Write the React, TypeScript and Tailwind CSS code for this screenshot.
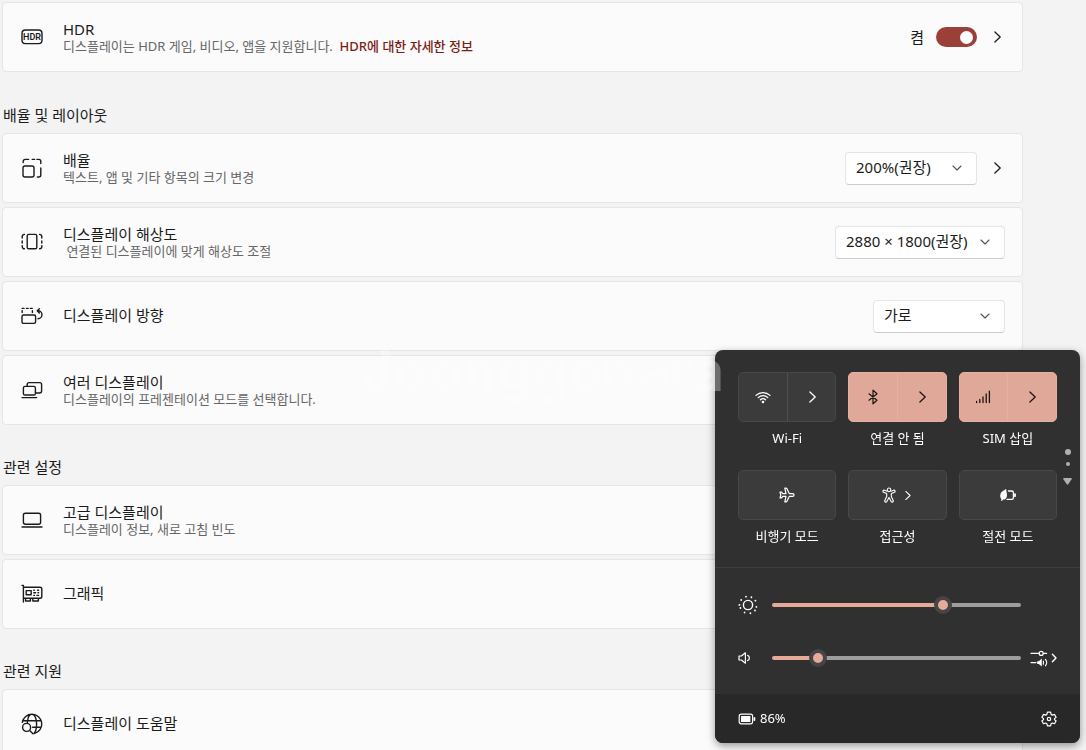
import React, { useState } from 'react';

type IconProps = { className?: string; children: React.ReactNode; size?: number };

function Icon({ className = '', children, size = 22 }: IconProps) {
  return (
    <svg
      width={size}
      height={size}
      viewBox={`0 0 ${size} ${size}`}
      fill="none"
      stroke="currentColor"
      strokeWidth="1.4"
      strokeLinecap="round"
      strokeLinejoin="round"
      aria-hidden="true"
      className={`shrink-0 ${className}`}
    >
      {children}
    </svg>
  );
}

const ChevronRight = ({ size = 16 }: { size?: number }) => (
  <svg width={size} height={size} viewBox="0 0 16 16" fill="none" stroke="currentColor" strokeWidth="1.3" strokeLinecap="round" strokeLinejoin="round" aria-hidden="true">
    <path d="M5.9 3 L11.2 8 L5.9 13" />
  </svg>
);

const HdrIcon = () => (
  <Icon>
    <rect x="1" y="4" width="20" height="13.6" rx="3.4" />
    <text x="11" y="14" textAnchor="middle" fontSize="9" fontWeight="600" fontFamily="Roboto" fill="currentColor" stroke="none">HDR</text>
  </Icon>
);

const ScaleIcon = () => (
  <Icon>
    <rect x="2" y="9" width="11" height="11" rx="2" />
    <path d="M2.2 5.6 V4.4 a2 2 0 0 1 2-2 H7.6 M11.2 2.4 H13.6 M16 2.4 H17.8 a2 2 0 0 1 2 2 V6.6 M19.8 11 V18 a2 2 0 0 1-2 2 H16.4" />
  </Icon>
);

const ResolutionIcon = () => (
  <Icon>
    <rect x="6.2" y="3.4" width="9.6" height="14.4" rx="1.6" />
    <path d="M3.4 3.4 a2.2 2.2 0 0 0-2.2 2.2 V7 M1.2 10 V12 M1.2 14.6 V15.6 a2.2 2.2 0 0 0 2.2 2.2 M18.6 3.4 a2.2 2.2 0 0 1 2.2 2.2 V7 M20.8 10 V12 M20.8 14.6 V15.6 a2.2 2.2 0 0 1-2.2 2.2" />
  </Icon>
);

const OrientationIcon = () => (
  <Icon>
    <rect x="1" y="10" width="13.6" height="8.4" rx="1.6" />
    <path d="M1.2 7.4 V5.6 M1.2 3.4 H3 M5.4 3.4 H7.2 M9.4 3.4 H11.2 M11.4 5.8 V7.4 M17 5.8 a4 4 0 0 1 0 8 M18.4 3.8 L16.2 5.8 L18.4 8" />
  </Icon>
);

const MultiIcon = () => (
  <Icon>
    <rect x="2.4" y="7.4" width="12" height="8.6" rx="1.6" />
    <path d="M6.2 7.2 V5.6 a2 2 0 0 1 2-2 H18.6 a2 2 0 0 1 2 2 V12 a2 2 0 0 1-2 2 H14.6 M1 18.6 H15.6" />
  </Icon>
);

const LaptopIcon = () => (
  <Icon>
    <rect x="2.4" y="4.2" width="17.2" height="11" rx="2" />
    <path d="M1 18 H21" />
  </Icon>
);

const GraphicsIcon = () => (
  <Icon>
    <path d="M1 2.4 H2.4 V19 M2.4 4.2 H19 a1.8 1.8 0 0 1 1.8 1.8 V13.4 a1.8 1.8 0 0 1-1.8 1.8 H2.4 M4.6 15.4 V18 H9.4 V15.4 M11.8 15.4 V18 H17.4 V15.4" />
    <rect x="5.2" y="7.6" width="5" height="4.2" />
    <path d="M12.8 7.2 H13.4 M16.6 7.2 H17.6 M12.8 9.8 H14.6 M17 9.8 H17.6 M12.8 12.4 H13.4 M16 12.4 H17.6" />
  </Icon>
);

const HelpIcon = () => (
  <Icon>
    <path d="M1.3 9.4 a9.8 9.8 0 1 1 12.4 11 M1.6 7.8 H20.2 M14 14.2 H20.2 M6.6 7.6 C7 3.6 9 1.2 11 1.2 C13.6 1.2 15.6 5.4 15.6 11 C15.6 16 14.4 19 13 20.4 M6.6 7.8 C6.4 8.4 6.4 9 6.4 9.4 M11.6 14.2 H14" />
    <circle cx="5.6" cy="14.4" r="4" />
    <path d="M8.6 17.4 L12 20.8" />
  </Icon>
);

const WifiIcon = () => (
  <Icon size={16}>
    <path strokeWidth="1.3" d="M1 6.4 a10 10 0 0 1 14 0 M3.2 8.6 a7 7 0 0 1 9.6 0 M5.4 10.8 a3.8 3.8 0 0 1 5.2 0" />
    <circle cx="8" cy="13" r="1.3" fill="currentColor" stroke="none" />
  </Icon>
);

const BluetoothIcon = () => (
  <Icon size={16}>
    <path strokeWidth="1.2" d="M4 4.8 L12 11.2 L8 14.8 V1.2 L12 4.8 L4 11.2" />
  </Icon>
);

const SignalIcon = () => (
  <Icon size={16}>
    <path strokeWidth="1.3" d="M1.6 13.6 V12.4 M4.8 13.6 V10.4 M8 13.6 V7.8 M11.2 13.6 V5 M14.4 13.6 V2.2" />
  </Icon>
);

const PlaneIcon = () => (
  <Icon size={16}>
    <path strokeWidth="1.2" d="M15 8 a1.3 1.3 0 0 0-1.3-1.3 H10.4 L7.8 1.6 a1 1 0 0 0-.9-.5 H5.8 L7 6.7 H3.8 L2.4 5 H1 L1.8 8 L1 11 H2.4 L3.8 9.3 H7 L5.8 14.9 H6.9 a1 1 0 0 0 .9-.5 L10.4 9.3 H13.7 A1.3 1.3 0 0 0 15 8 Z" />
  </Icon>
);

const AccessibilityIcon = () => (
  <Icon size={16}>
    <circle cx="8" cy="2.8" r="1.8" strokeWidth="1.1" />
    <path strokeWidth="1.1" d="M6 4.2 L3.4 3.2 a1.1 1.1 0 0 0-.9 2 L5.7 6.6 V9.4 L3.8 13.6 a1.1 1.1 0 0 0 2 .9 L8 10.6 L10.2 14.5 a1.1 1.1 0 0 0 2-.9 L10.3 9.4 V6.6 L13.5 5.2 a1.1 1.1 0 0 0-.9-2 L10 4.2" />
  </Icon>
);

const EnergyIcon = () => (
  <Icon size={16}>
    <path strokeWidth="1.3" d="M8.4 4 H11.8 a1.6 1.6 0 0 1 1.6 1.6 V10.8 a1.6 1.6 0 0 1-1.6 1.6 H7" />
    <path strokeWidth="1.8" d="M15 7.2 V9.2" />
    <path d="M6.2 2 C3.6 3.6 .2 4.8 .2 8.8 C.2 10.4 .8 11.4 1.4 12 L1 13.8 H2.2 L3 12.6 C6.4 12.6 7.4 9.6 6.8 6.4 C6.6 5 6.2 3.6 6.2 2 Z" fill="currentColor" stroke="none" />
  </Icon>
);

const SunIcon = () => (
  <Icon size={20}>
    <circle cx="10" cy="10" r="4.6" />
    <path strokeWidth="1.8" d="M8 1.6 V1.7 M13.4 2.2 V2.3 M17.4 5.6 V5.7 M18.4 11.8 V11.9 M17 15.4 V15.5 M12.4 18.2 V18.3 M6.6 17.4 V17.5 M2.4 13 V13.1 M1.4 9.8 V9.9 M3.2 5 V5.1" />
  </Icon>
);

const SpeakerIcon = () => (
  <Icon size={14}>
    <path strokeWidth="1.2" d="M1 5 H3.4 L7.4 1.8 V12.2 L3.4 9 H1 Z M9.6 4.4 a2.8 2.8 0 0 1 0 5.2" />
  </Icon>
);

// mixer and its chevron are one glyph
const MixerIcon = () => (
  <svg width="27" height="18" viewBox="0 0 27 18" fill="none" stroke="currentColor" strokeWidth="1.2" strokeLinecap="round" strokeLinejoin="round" aria-hidden="true">
    <path d="M1 4.4 H9 M13.4 4.4 H16.6 M1 13.6 H6" />
    <circle cx="11.2" cy="4.4" r="2" />
    <path d="M7.2 12.2 H8.8 L11.8 9.6 V17.6 L8.8 15 H7.2 Z" fill="currentColor" stroke="none" />
    <path strokeWidth="1.1" d="M13.4 12 V15.2 M15.4 10.4 a5 5 0 0 1 0 6.4" />
    <path strokeWidth="1.4" d="M22.4 5.2 L26 9 L22.4 12.8" />
  </svg>
);

const BatteryIcon = () => (
  <Icon size={18}>
    <rect x="1.2" y="4.2" width="13.4" height="9.6" rx="2" strokeWidth="1.2" />
    <rect x="3" y="6" width="9.4" height="6" rx=".6" fill="currentColor" stroke="none" />
    <path strokeWidth="1.8" d="M16.4 8 V10" />
  </Icon>
);

const GearIcon = () => (
  <Icon size={16}>
    <path strokeWidth="1.2" d="M6.4 1.2 H9.6 L10.1 3.4 L11.4 4.1 L13.5 3.4 L15.1 6.2 L13.5 7.6 V8.6 L15.1 10 L13.5 12.7 L11.4 12 L10.1 12.7 L9.6 14.9 H6.4 L5.9 12.7 L4.6 12 L2.5 12.7 L.9 10 L2.5 8.6 V7.6 L.9 6.2 L2.5 3.4 L4.6 4.1 L5.9 3.4 Z" />
    <circle cx="8" cy="8" r="1.7" strokeWidth="1.2" />
  </Icon>
);

type RowProps = {
  icon: React.ReactNode;
  title: string;
  description?: React.ReactNode;
  children?: React.ReactNode;
};

function Row({ icon, title, description, children }: RowProps) {
  return (
    <div className="flex min-h-[70px] items-center rounded-[4px] border border-[#e5e5e5] bg-[#fbfbfb] pr-[17px] pl-[18px]">
      {icon}
      <div className="ml-5 flex-1 pb-[2px]">
        <h3 className="text-[15px] leading-5">{title}</h3>
        {description && <p className="text-[13px] leading-[14px] whitespace-pre text-[#666666]">{description}</p>}
      </div>
      <div className="flex items-center gap-3">{children}</div>
    </div>
  );
}

function Section({ title, children }: { title: string; children: React.ReactNode }) {
  return (
    <section>
      <h2 className="flex h-[60px] items-end pb-2 pl-px text-[15px] leading-5">{title}</h2>
      <div className="flex flex-col gap-1">{children}</div>
    </section>
  );
}

function Dropdown({ label, options, className }: { label: string; options: string[]; className: string }) {
  return (
    <div className={`relative ${className}`}>
      <select
        aria-label={label}
        className="h-[33px] w-full appearance-none rounded-[4px] border border-[#e5e5e5] border-b-[#cccccc] bg-white pb-[2px] pl-[10px] text-[15px]"
      >
        {options.map(option => (
          <option key={option}>{option}</option>
        ))}
      </select>
      <svg className="pointer-events-none absolute top-[11px] right-[15px]" width="10" height="10" viewBox="0 0 10 10" fill="none" stroke="#555" strokeWidth="1.1" strokeLinecap="round" strokeLinejoin="round" aria-hidden="true">
        <path d="M1 3 L5 7 L9 3" />
      </svg>
    </div>
  );
}

type TileProps = {
  label: string;
  icon: React.ReactNode;
  split?: boolean;
  active?: boolean;
  chevron?: boolean;
};

function Tile({ label, icon, split, active, chevron }: TileProps) {
  const colors = active
    ? 'border-[#e6b0a1] bg-[#e0a898] text-[#1d1512] divide-[#e6b0a1]'
    : 'border-[#484848] bg-[#3b3b3b] text-white divide-[#505050]';

  return (
    <div className="flex flex-col items-center">
      <div className={`flex h-[50px] w-full divide-x rounded-[5px] border ${colors}`}>
        <button type="button" aria-label={label} className="flex flex-1 items-center justify-center gap-1">
          {icon}
          {chevron && <ChevronRight size={13} />}
        </button>
        {split && (
          <button type="button" aria-label={`${label} 관리`} className="flex flex-1 items-center justify-center">
            <ChevronRight size={16} />
          </button>
        )}
      </div>
      <span className="mt-[7px] text-[13px] leading-[18px]">{label}</span>
    </div>
  );
}

function Slider({ label, initial }: { label: string; initial: number }) {
  const [value, setValue] = useState(initial);
  const stop = `calc(9px + (100% - 18px) * ${value / 100})`;

  return (
    <input
      type="range"
      aria-label={label}
      value={value}
      onChange={e => setValue(Number(e.target.value))}
      style={{ backgroundImage: `linear-gradient(to right, #e5aa9a ${stop}, #9d9d9d ${stop})` }}
      className="h-1 min-w-0 flex-1 appearance-none rounded-full [&::-webkit-slider-thumb]:size-[18px] [&::-webkit-slider-thumb]:appearance-none [&::-webkit-slider-thumb]:rounded-full [&::-webkit-slider-thumb]:border-4 [&::-webkit-slider-thumb]:border-[#454545] [&::-webkit-slider-thumb]:bg-[#e5aa9a]"
    />
  );
}

function QuickSettings() {
  return (
    <aside className="fixed right-[6px] bottom-[7px] w-[365px] overflow-hidden rounded-lg bg-[#303030] text-white shadow-[0_3px_8px_rgba(0,0,0,0.4)]">
      <div className="grid grid-cols-3 gap-x-3 gap-y-[23px] border-b border-[#3d3d3d] px-[23px] py-[22px]">
        <Tile label="Wi-Fi" icon={<WifiIcon />} split />
        <Tile label="연결 안 됨" icon={<BluetoothIcon />} split active />
        <Tile label="SIM 삽입" icon={<SignalIcon />} split active />
        <Tile label="비행기 모드" icon={<PlaneIcon />} />
        <Tile label="접근성" icon={<AccessibilityIcon />} chevron />
        <Tile label="절전 모드" icon={<EnergyIcon />} />
      </div>

      <div className="flex flex-col gap-[33px] px-[23px] pt-[27px] pb-[26px]">
        <div className="flex h-5 items-center">
          <span className="w-[34px]"><SunIcon /></span>
          <Slider label="밝기" initial={70} />
          <span className="w-9" />
        </div>
        <div className="flex h-5 items-center">
          <span className="w-[34px]"><SpeakerIcon /></span>
          <Slider label="볼륨" initial={16} />
          <button type="button" aria-label="사운드 출력" className="flex w-9 justify-end">
            <MixerIcon />
          </button>
        </div>
      </div>

      <footer className="flex h-[49px] items-center justify-between bg-[#282828] px-[23px]">
        <button type="button" className="flex items-center gap-1 text-[13px]">
          <BatteryIcon />
          86%
        </button>
        <button type="button" aria-label="모든 설정">
          <GearIcon />
        </button>
      </footer>

      {/* page indicator */}
      <div className="absolute top-[99px] right-2 flex flex-col items-center text-[#b0b0b0]">
        <span className="size-[6px] rounded-full bg-current" />
        <span className="mt-[7px] size-1 rounded-full bg-current" />
        <svg className="mt-3" width="9" height="7" viewBox="0 0 9 7" fill="currentColor" aria-hidden="true">
          <path d="M1 0 H8 a.8 .8 0 0 1 .6 1.2 L5.2 6.2 a.9 .9 0 0 1-1.4 0 L.4 1.2 A.8 .8 0 0 1 1 0 Z" />
        </svg>
      </div>
    </aside>
  );
}

export default function App() {
  const [hdr, setHdr] = useState(true);

  return (
    <div className="h-screen overflow-hidden bg-[#f3f3f3] font-['Noto_Sans','Noto_Sans_CJK_KR',sans-serif] text-[#1b1b1b]">
      <main className="pt-[2px] pr-[63px] pl-[2px]">
        <div className="pb-px">
          <Row
            icon={<HdrIcon />}
            title="HDR"
            description={
              <>
                디스플레이는 HDR 게임, 비디오, 앱을 지원합니다.{'  '}
                <a href="#hdr" className="font-medium text-[#7a1f18]">HDR에 대한 자세한 정보</a>
              </>
            }
          >
            <label htmlFor="hdr-toggle" className="text-[15px]">켬</label>
            <input
              id="hdr-toggle"
              type="checkbox"
              checked={hdr}
              onChange={e => setHdr(e.target.checked)}
              className="flex h-5 w-[41px] appearance-none items-center rounded-full bg-[#8a8a8a] px-1 before:size-[13px] before:rounded-full before:bg-white checked:justify-end checked:bg-[#9a4038]"
            />
            <button type="button" aria-label="HDR 설정"><ChevronRight /></button>
          </Row>
        </div>

        <Section title="배율 및 레이아웃">
          <Row icon={<ScaleIcon />} title="배율" description="텍스트, 앱 및 기타 항목의 크기 변경">
            <Dropdown label="배율" options={['200%(권장)', '100%', '150%']} className="w-[132px]" />
            <button type="button" aria-label="배율 설정"><ChevronRight /></button>
          </Row>
          <Row icon={<ResolutionIcon />} title="디스플레이 해상도" description=" 연결된 디스플레이에 맞게 해상도 조절">
            <Dropdown label="디스플레이 해상도" options={['2880 × 1800(권장)', '1920 × 1200']} className="w-[170px]" />
          </Row>
          <Row icon={<OrientationIcon />} title="디스플레이 방향">
            <Dropdown label="디스플레이 방향" options={['가로', '세로']} className="w-[132px]" />
          </Row>
          <Row icon={<MultiIcon />} title="여러 디스플레이" description="디스플레이의 프레젠테이션 모드를 선택합니다." />
        </Section>

        <Section title="관련 설정">
          <Row icon={<LaptopIcon />} title="고급 디스플레이" description="디스플레이 정보, 새로 고침 빈도" />
          <Row icon={<GraphicsIcon />} title="그래픽" />
        </Section>

        <Section title="관련 지원">
          <Row icon={<HelpIcon />} title="디스플레이 도움말" />
        </Section>
      </main>

      <QuickSettings />

      {/* watermark */}
      <div className="pointer-events-none fixed top-[339px] right-[362px] text-[56px] leading-[64px] font-bold text-white/30 font-[Inter]" aria-hidden="true">
        Joonggonara
      </div>
    </div>
  );
}
